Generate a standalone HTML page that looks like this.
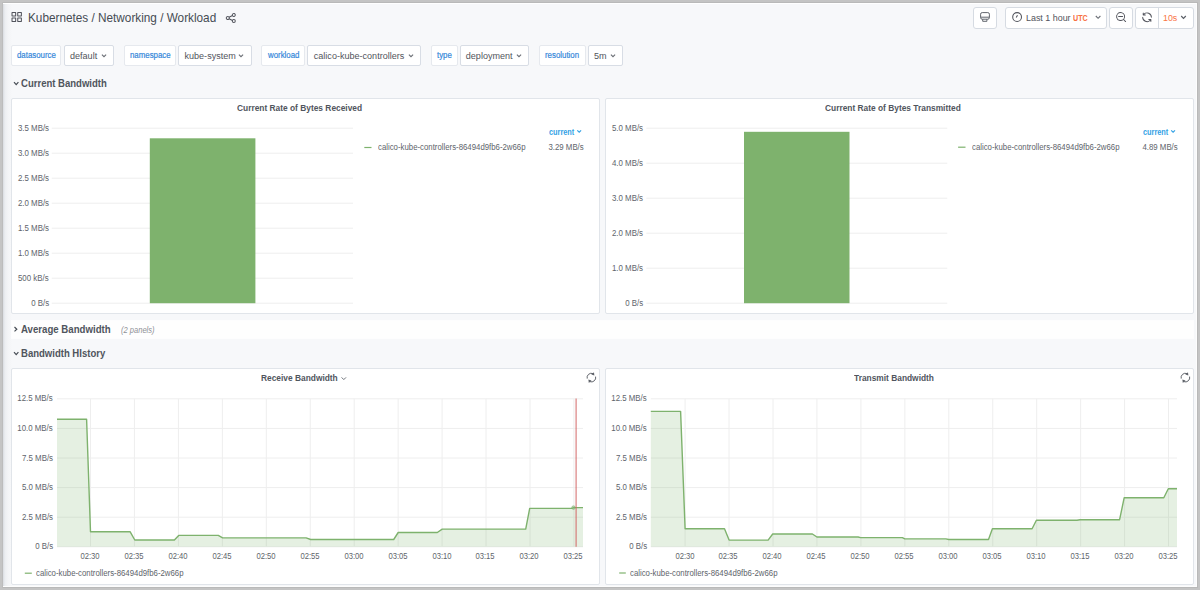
<!DOCTYPE html><html><head><meta charset="utf-8"><style>
html,body{margin:0;padding:0;}html{width:1200px;height:590px;overflow:hidden;}body{width:1200px;height:590px;overflow:hidden;position:relative;background:#c4c4c4;font-family:"Liberation Sans",sans-serif;}
#pg{position:absolute;left:3px;top:3px;width:1194px;height:584px;background:linear-gradient(to right,#d9dce1 0px,#eceef1 2px,#f3f4f6 5px,#f7f8fa 9px);}
</style></head><body><div id="pg"></div>
<div style="position:absolute;left:2px;top:2px;width:1196px;height:1px;background:#b9b9b9"></div>
<div style="position:absolute;left:2px;top:587px;width:1196px;height:1px;background:#b9b9b9"></div>
<div style="position:absolute;left:2px;top:2px;width:1px;height:586px;background:#bcbcbc"></div>
<div style="position:absolute;left:1197px;top:2px;width:1px;height:586px;background:#b9b9b9"></div>
<div style="position:absolute;left:3px;top:3px;width:1194px;height:1px;background:#ffffff"></div>
<div style="position:absolute;left:3px;top:586px;width:1194px;height:1px;background:#fdfdfd"></div>
<div style="position:absolute;left:1196px;top:3px;width:1px;height:584px;background:#fdfdfd"></div>
<svg style="position:absolute;left:0;top:0" width="1200" height="40" viewBox="0 0 1200 40"><path transform="translate(10.46,11.12) scale(0.52,0.49)" d="M10,13H3a1,1,0,0,0-1,1v7a1,1,0,0,0,1,1h7a1,1,0,0,0,1-1V14A1,1,0,0,0,10,13ZM9,20H4V15H9ZM21,2H14a1,1,0,0,0-1,1v7a1,1,0,0,0,1,1h7a1,1,0,0,0,1-1V3A1,1,0,0,0,21,2ZM20,9H15V4h5Zm1,4H14a1,1,0,0,0-1,1v7a1,1,0,0,0,1,1h7a1,1,0,0,0,1-1V14A1,1,0,0,0,21,13Zm-1,7H15V15h5ZM10,2H3A1,1,0,0,0,2,3v7a1,1,0,0,0,1,1h7a1,1,0,0,0,1-1V3A1,1,0,0,0,10,2ZM9,9H4V4H9Z" fill="#52545c"/><path transform="translate(224.80,12.00) scale(0.5)" d="M18,14a4,4,0,0,0-3.08,1.48l-5.1-2.35a3.64,3.64,0,0,0,0-2.26l5.1-2.35A4,4,0,1,0,14,6a4.170,4.170,0,0,0,.07.71L8.790,9.14a4,4,0,1,0,0,5.72l5.28,2.43A4.17,4.17,0,0,0,14,18a4,4,0,1,0,4-4ZM18,4a2,2,0,1,1-2,2A2,2,0,0,1,18,4ZM6,14a2,2,0,1,1,2-2A2,2,0,0,1,6,14Zm12,6a2,2,0,1,1,2-2A2,2,0,0,1,18,20Z" fill="#52545c"/></svg>
<div style="position:absolute;left:28.2px;top:10.88px;font-size:12.4px;line-height:14.248px;color:#464c54;font-weight:400;font-style:normal;white-space:pre;transform:scaleX(0.95);transform-origin:left top;">Kubernetes / Networking / Workload</div>
<div style="position:absolute;left:973px;top:7px;width:24px;height:22px;box-sizing:border-box;background:#fff;border:1px solid #d6dbe2;border-radius:3px;"></div>
<div style="position:absolute;left:1005px;top:7px;width:102px;height:22px;box-sizing:border-box;background:#fff;border:1px solid #d6dbe2;border-radius:3px;"></div>
<div style="position:absolute;left:1109px;top:7px;width:24px;height:22px;box-sizing:border-box;background:#fff;border:1px solid #d6dbe2;border-radius:3px;"></div>
<div style="position:absolute;left:1135px;top:7px;width:59px;height:22px;box-sizing:border-box;background:#fff;border:1px solid #d6dbe2;border-radius:3px;"></div>
<div style="position:absolute;left:1158px;top:7px;width:1px;height:22px;background:#d6dbe2"></div>
<svg style="position:absolute;left:0;top:0" width="1200" height="40" viewBox="0 0 1200 40"><g fill="none" stroke="#5a5e66" stroke-width="0.95"><rect x="980.6" y="12.6" width="8.8" height="6.6" rx="1.6"/><line x1="980.6" y1="17.2" x2="989.4" y2="17.2"/><path d="M982.7,19.2 L982.7,21.3 L986.9,21.3 L986.9,19.2"/></g><g fill="none" stroke="#52545c" stroke-width="1.05"><circle cx="1017.1" cy="17" r="4.4"/><polyline points="1016.2,17.6 1017.5,15.3"/></g><path transform="translate(1115.10,11.10) scale(0.5)" d="M21.71,20.29,18,16.61A9,9,0,1,0,16.61,18l3.68,3.68a1,1,0,0,0,1.42,0A1,1,0,0,0,21.71,20.29ZM11,18a7,7,0,1,1,7-7A7,7,0,0,1,11,18Zm4-8H7a1,1,0,0,0,0,2h8a1,1,0,0,0,0-2Z" fill="#52545c"/><path transform="translate(1141.23,11.43) scale(0.485)" d="M19.91,15.51H15.38a1,1,0,0,0,0,2h2.4A8,8,0,0,1,4,12a1,1,0,0,0-2,0,10,10,0,0,0,16.88,7.23V21a1,1,0,0,0,2,0V16.5A1,1,0,0,0,19.91,15.51ZM12,2A10,10,0,0,0,5.12,4.77V3a1,1,0,0,0-2,0V7.5a1,1,0,0,0,1,1h4.5a1,1,0,0,0,0-2H6.22A8,8,0,0,1,20,12a1,1,0,0,0,2,0A10,10,0,0,0,12,2Z" fill="#52545c"/><g fill="none" stroke="#52545c" stroke-width="1.1"><polyline points="1095.8,16.0 1098.1,18.3 1100.4,16.0" stroke="#6a6e75" stroke-width="1.1"/><polyline points="1181.2,16.0 1183.5,18.3 1185.8,16.0" stroke="#5a5e66" stroke-width="1.2"/></g></svg>
<div style="position:absolute;left:1025.8px;top:12.80px;font-size:9.5px;line-height:10.915px;color:#52545c;font-weight:400;font-style:normal;white-space:pre;transform:scaleX(0.938);transform-origin:left top;">Last 1 hour</div>
<div style="position:absolute;left:1072.9px;top:13.91px;font-size:8.5px;line-height:9.767px;color:#f86f40;font-weight:700;font-style:normal;white-space:pre;transform:scaleX(0.84);transform-origin:left top;">UTC</div>
<div style="position:absolute;left:1162.9px;top:11.71px;font-size:9.6px;line-height:11.030px;color:#fa7545;font-weight:400;font-style:normal;white-space:pre;transform:scaleX(0.918);transform-origin:left top;">10s</div>
<div style="position:absolute;left:11px;top:45px;width:50px;height:21px;box-sizing:border-box;background:#fff;border:1px solid #e6e9ee;border-radius:2px;"></div>
<div style="position:absolute;left:64px;top:45px;width:50px;height:21px;box-sizing:border-box;background:#fff;border:1px solid #d8dde5;border-radius:2px;"></div>
<div style="position:absolute;left:16.8px;top:49.95px;font-size:8.9px;line-height:10.226px;color:#2f83d6;font-weight:400;font-style:normal;white-space:pre;transform:scaleX(0.885);transform-origin:left top;-webkit-text-stroke:0.2px #3a8ee0;">datasource</div>
<div style="position:absolute;left:70px;top:50.81px;font-size:9.05px;line-height:10.398px;color:#52545c;font-weight:400;font-style:normal;white-space:pre;">default</div>
<svg style="position:absolute;left:100.5px;top:52.6px" width="8" height="6"><polyline points="0.9,1.6 3,3.7 5.1,1.6" fill="none" stroke="#6a6e75" stroke-width="1.1"/></svg>
<div style="position:absolute;left:124px;top:45px;width:52px;height:21px;box-sizing:border-box;background:#fff;border:1px solid #e6e9ee;border-radius:2px;"></div>
<div style="position:absolute;left:178px;top:45px;width:74px;height:21px;box-sizing:border-box;background:#fff;border:1px solid #d8dde5;border-radius:2px;"></div>
<div style="position:absolute;left:129.9px;top:49.95px;font-size:8.9px;line-height:10.226px;color:#2f83d6;font-weight:400;font-style:normal;white-space:pre;transform:scaleX(0.885);transform-origin:left top;-webkit-text-stroke:0.2px #3a8ee0;">namespace</div>
<div style="position:absolute;left:184.5px;top:50.81px;font-size:9.05px;line-height:10.398px;color:#52545c;font-weight:400;font-style:normal;white-space:pre;">kube-system</div>
<svg style="position:absolute;left:238px;top:52.6px" width="8" height="6"><polyline points="0.9,1.6 3,3.7 5.1,1.6" fill="none" stroke="#6a6e75" stroke-width="1.1"/></svg>
<div style="position:absolute;left:261px;top:45px;width:44px;height:21px;box-sizing:border-box;background:#fff;border:1px solid #e6e9ee;border-radius:2px;"></div>
<div style="position:absolute;left:307px;top:45px;width:114px;height:21px;box-sizing:border-box;background:#fff;border:1px solid #d8dde5;border-radius:2px;"></div>
<div style="position:absolute;left:267.7px;top:49.95px;font-size:8.9px;line-height:10.226px;color:#2f83d6;font-weight:400;font-style:normal;white-space:pre;transform:scaleX(0.885);transform-origin:left top;-webkit-text-stroke:0.2px #3a8ee0;">workload</div>
<div style="position:absolute;left:313.8px;top:50.81px;font-size:9.05px;line-height:10.398px;color:#52545c;font-weight:400;font-style:normal;white-space:pre;">calico-kube-controllers</div>
<svg style="position:absolute;left:408px;top:52.6px" width="8" height="6"><polyline points="0.9,1.6 3,3.7 5.1,1.6" fill="none" stroke="#6a6e75" stroke-width="1.1"/></svg>
<div style="position:absolute;left:431px;top:45px;width:27px;height:21px;box-sizing:border-box;background:#fff;border:1px solid #e6e9ee;border-radius:2px;"></div>
<div style="position:absolute;left:460px;top:45px;width:69px;height:21px;box-sizing:border-box;background:#fff;border:1px solid #d8dde5;border-radius:2px;"></div>
<div style="position:absolute;left:436.9px;top:49.95px;font-size:8.9px;line-height:10.226px;color:#2f83d6;font-weight:400;font-style:normal;white-space:pre;transform:scaleX(0.885);transform-origin:left top;-webkit-text-stroke:0.2px #3a8ee0;">type</div>
<div style="position:absolute;left:465.8px;top:50.81px;font-size:9.05px;line-height:10.398px;color:#52545c;font-weight:400;font-style:normal;white-space:pre;">deployment</div>
<svg style="position:absolute;left:516px;top:52.6px" width="8" height="6"><polyline points="0.9,1.6 3,3.7 5.1,1.6" fill="none" stroke="#6a6e75" stroke-width="1.1"/></svg>
<div style="position:absolute;left:539px;top:45px;width:47px;height:21px;box-sizing:border-box;background:#fff;border:1px solid #e6e9ee;border-radius:2px;"></div>
<div style="position:absolute;left:588px;top:45px;width:35px;height:21px;box-sizing:border-box;background:#fff;border:1px solid #d8dde5;border-radius:2px;"></div>
<div style="position:absolute;left:545px;top:49.95px;font-size:8.9px;line-height:10.226px;color:#2f83d6;font-weight:400;font-style:normal;white-space:pre;transform:scaleX(0.885);transform-origin:left top;-webkit-text-stroke:0.2px #3a8ee0;">resolution</div>
<div style="position:absolute;left:594px;top:50.81px;font-size:9.05px;line-height:10.398px;color:#52545c;font-weight:400;font-style:normal;white-space:pre;">5m</div>
<svg style="position:absolute;left:610px;top:52.6px" width="8" height="6"><polyline points="0.9,1.6 3,3.7 5.1,1.6" fill="none" stroke="#6a6e75" stroke-width="1.1"/></svg>
<svg style="position:absolute;left:13.2px;top:80.6px" width="8" height="6"><polyline points="1,1.2 3.2,3.6 5.4,1.2" fill="none" stroke="#464c54" stroke-width="1.2"/></svg>
<div style="position:absolute;left:21.1px;top:76.61px;font-size:10.6px;line-height:12.179px;color:#50555d;font-weight:700;font-style:normal;white-space:pre;transform:scaleX(0.9);transform-origin:left top;">Current Bandwidth</div>
<div style="position:absolute;left:11px;top:320px;width:1183px;height:19px;box-sizing:border-box;background:#fefefe;border:1px solid #fdfdfe;border-radius:0px;"></div>
<svg style="position:absolute;left:13px;top:326px" width="6" height="8"><polyline points="1.5,1 3.8,3.2 1.5,5.4" fill="none" stroke="#464c54" stroke-width="1.2"/></svg>
<div style="position:absolute;left:21.1px;top:322.61px;font-size:10.6px;line-height:12.179px;color:#50555d;font-weight:700;font-style:normal;white-space:pre;transform:scaleX(0.91);transform-origin:left top;">Average Bandwidth</div>
<div style="position:absolute;left:120.7px;top:326.09px;font-size:8.3px;line-height:9.537px;color:#8e9096;font-weight:400;font-style:italic;white-space:pre;transform:scaleX(0.91);transform-origin:left top;">(2 panels)</div>
<svg style="position:absolute;left:13.2px;top:351.2px" width="8" height="6"><polyline points="1,1.2 3.2,3.6 5.4,1.2" fill="none" stroke="#464c54" stroke-width="1.2"/></svg>
<div style="position:absolute;left:21.4px;top:346.91px;font-size:10.6px;line-height:12.179px;color:#50555d;font-weight:700;font-style:normal;white-space:pre;transform:scaleX(0.9);transform-origin:left top;">Bandwidth HIstory</div>
<div style="position:absolute;left:11px;top:98px;width:589px;height:216px;box-sizing:border-box;background:#fff;border:1px solid #e1e5ea;border-radius:2px;"></div>
<div style="position:absolute;left:605px;top:98px;width:589px;height:216px;box-sizing:border-box;background:#fff;border:1px solid #e1e5ea;border-radius:2px;"></div>
<div style="position:absolute;left:11px;top:368px;width:589px;height:217px;box-sizing:border-box;background:#fff;border:1px solid #e1e5ea;border-radius:2px;"></div>
<div style="position:absolute;left:605px;top:368px;width:589px;height:217px;box-sizing:border-box;background:#fff;border:1px solid #e1e5ea;border-radius:2px;"></div>
<div style="position:absolute;left:236.9px;top:102.58px;font-size:9.3px;line-height:10.686px;color:#50555d;font-weight:700;font-style:normal;white-space:pre;transform:scaleX(0.9);transform-origin:left top;">Current Rate of Bytes Received</div>
<div style="position:absolute;left:824.5px;top:102.58px;font-size:9.3px;line-height:10.686px;color:#50555d;font-weight:700;font-style:normal;white-space:pre;transform:scaleX(0.9);transform-origin:left top;">Current Rate of Bytes Transmitted</div>
<svg style="position:absolute;left:0;top:0" width="1200" height="590" viewBox="0 0 1200 590"><line x1="51.7" y1="128.2" x2="353" y2="128.2" stroke="#eeeeee" stroke-width="1"/><line x1="51.7" y1="153.2" x2="353" y2="153.2" stroke="#eeeeee" stroke-width="1"/><line x1="51.7" y1="178.2" x2="353" y2="178.2" stroke="#eeeeee" stroke-width="1"/><line x1="51.7" y1="203.2" x2="353" y2="203.2" stroke="#eeeeee" stroke-width="1"/><line x1="51.7" y1="228.2" x2="353" y2="228.2" stroke="#eeeeee" stroke-width="1"/><line x1="51.7" y1="253.2" x2="353" y2="253.2" stroke="#eeeeee" stroke-width="1"/><line x1="51.7" y1="278.2" x2="353" y2="278.2" stroke="#eeeeee" stroke-width="1"/><line x1="51.7" y1="303.2" x2="353" y2="303.2" stroke="#eeeeee" stroke-width="1"/><rect x="149.8" y="138.3" width="105.6" height="164.89999999999998" fill="#7eb26d"/><line x1="646.3" y1="128.2" x2="947.3" y2="128.2" stroke="#eeeeee" stroke-width="1"/><line x1="646.3" y1="163.2" x2="947.3" y2="163.2" stroke="#eeeeee" stroke-width="1"/><line x1="646.3" y1="198.2" x2="947.3" y2="198.2" stroke="#eeeeee" stroke-width="1"/><line x1="646.3" y1="233.2" x2="947.3" y2="233.2" stroke="#eeeeee" stroke-width="1"/><line x1="646.3" y1="268.2" x2="947.3" y2="268.2" stroke="#eeeeee" stroke-width="1"/><line x1="646.3" y1="303.2" x2="947.3" y2="303.2" stroke="#eeeeee" stroke-width="1"/><rect x="744" y="131.8" width="105.5" height="171.39999999999998" fill="#7eb26d"/><line x1="364.3" y1="147.5" x2="371.5" y2="147.5" stroke="#7eb26d" stroke-width="1.2"/><line x1="958.1" y1="147.2" x2="965.5" y2="147.2" stroke="#7eb26d" stroke-width="1.2"/><line x1="24.8" y1="573.2" x2="31.8" y2="573.2" stroke="#7eb26d" stroke-width="1.2"/><line x1="619.2" y1="573" x2="625.8" y2="573" stroke="#7eb26d" stroke-width="1.2"/><polyline points="577.3,130.3 579.2,132.2 581.1,130.3" fill="none" stroke="#33a2e5" stroke-width="1.2"/><polyline points="1171.2,130.3 1173.1,132.2 1175,130.3" fill="none" stroke="#33a2e5" stroke-width="1.2"/><line x1="57" y1="398.80" x2="583" y2="398.80" stroke="#eeeeee" stroke-width="1"/><line x1="57" y1="428.40" x2="583" y2="428.40" stroke="#eeeeee" stroke-width="1"/><line x1="57" y1="458.00" x2="583" y2="458.00" stroke="#eeeeee" stroke-width="1"/><line x1="57" y1="487.60" x2="583" y2="487.60" stroke="#eeeeee" stroke-width="1"/><line x1="57" y1="517.20" x2="583" y2="517.20" stroke="#eeeeee" stroke-width="1"/><line x1="57" y1="546.80" x2="583" y2="546.80" stroke="#eeeeee" stroke-width="1"/><line x1="90.50" y1="398.8" x2="90.50" y2="546.8" stroke="#eeeeee" stroke-width="1"/><line x1="134.45" y1="398.8" x2="134.45" y2="546.8" stroke="#eeeeee" stroke-width="1"/><line x1="178.40" y1="398.8" x2="178.40" y2="546.8" stroke="#eeeeee" stroke-width="1"/><line x1="222.35" y1="398.8" x2="222.35" y2="546.8" stroke="#eeeeee" stroke-width="1"/><line x1="266.30" y1="398.8" x2="266.30" y2="546.8" stroke="#eeeeee" stroke-width="1"/><line x1="310.25" y1="398.8" x2="310.25" y2="546.8" stroke="#eeeeee" stroke-width="1"/><line x1="354.20" y1="398.8" x2="354.20" y2="546.8" stroke="#eeeeee" stroke-width="1"/><line x1="398.15" y1="398.8" x2="398.15" y2="546.8" stroke="#eeeeee" stroke-width="1"/><line x1="442.10" y1="398.8" x2="442.10" y2="546.8" stroke="#eeeeee" stroke-width="1"/><line x1="486.05" y1="398.8" x2="486.05" y2="546.8" stroke="#eeeeee" stroke-width="1"/><line x1="530.00" y1="398.8" x2="530.00" y2="546.8" stroke="#eeeeee" stroke-width="1"/><line x1="573.95" y1="398.8" x2="573.95" y2="546.8" stroke="#eeeeee" stroke-width="1"/><line x1="650.8" y1="398.80" x2="1177" y2="398.80" stroke="#eeeeee" stroke-width="1"/><line x1="650.8" y1="428.40" x2="1177" y2="428.40" stroke="#eeeeee" stroke-width="1"/><line x1="650.8" y1="458.00" x2="1177" y2="458.00" stroke="#eeeeee" stroke-width="1"/><line x1="650.8" y1="487.60" x2="1177" y2="487.60" stroke="#eeeeee" stroke-width="1"/><line x1="650.8" y1="517.20" x2="1177" y2="517.20" stroke="#eeeeee" stroke-width="1"/><line x1="650.8" y1="546.80" x2="1177" y2="546.80" stroke="#eeeeee" stroke-width="1"/><line x1="685.10" y1="398.8" x2="685.10" y2="546.8" stroke="#eeeeee" stroke-width="1"/><line x1="729.05" y1="398.8" x2="729.05" y2="546.8" stroke="#eeeeee" stroke-width="1"/><line x1="773.00" y1="398.8" x2="773.00" y2="546.8" stroke="#eeeeee" stroke-width="1"/><line x1="816.95" y1="398.8" x2="816.95" y2="546.8" stroke="#eeeeee" stroke-width="1"/><line x1="860.90" y1="398.8" x2="860.90" y2="546.8" stroke="#eeeeee" stroke-width="1"/><line x1="904.85" y1="398.8" x2="904.85" y2="546.8" stroke="#eeeeee" stroke-width="1"/><line x1="948.80" y1="398.8" x2="948.80" y2="546.8" stroke="#eeeeee" stroke-width="1"/><line x1="992.75" y1="398.8" x2="992.75" y2="546.8" stroke="#eeeeee" stroke-width="1"/><line x1="1036.70" y1="398.8" x2="1036.70" y2="546.8" stroke="#eeeeee" stroke-width="1"/><line x1="1080.65" y1="398.8" x2="1080.65" y2="546.8" stroke="#eeeeee" stroke-width="1"/><line x1="1124.60" y1="398.8" x2="1124.60" y2="546.8" stroke="#eeeeee" stroke-width="1"/><line x1="1168.55" y1="398.8" x2="1168.55" y2="546.8" stroke="#eeeeee" stroke-width="1"/><path d="M57.0,419.3 L86.6,419.3 L90.5,531.8 L130.2,531.8 L134.8,540.0 L174.4,540.0 L178.7,535.4 L218.3,535.4 L222.6,537.9 L306.1,537.9 L310.7,539.5 L393.7,539.5 L398.2,532.5 L437.3,532.5 L442.2,529.1 L525.7,529.1 L529.7,508.4 L571.5,508.4 L574.0,507.6 L583.0,507.6 L583.0,546.8 L57.0,546.8 Z" fill="#7eb26d" fill-opacity="0.2" stroke="none"/><path d="M57.0,419.3 L86.6,419.3 L90.5,531.8 L130.2,531.8 L134.8,540.0 L174.4,540.0 L178.7,535.4 L218.3,535.4 L222.6,537.9 L306.1,537.9 L310.7,539.5 L393.7,539.5 L398.2,532.5 L437.3,532.5 L442.2,529.1 L525.7,529.1 L529.7,508.4 L571.5,508.4 L574.0,507.6 L583.0,507.6" fill="none" stroke="#7eb26d" stroke-width="1.4" stroke-linejoin="round"/><circle cx="573.5" cy="507.6" r="1.8" fill="#7eb26d" fill-opacity="0.5" stroke="#7eb26d" stroke-opacity="0.6" stroke-width="0.8"/><line x1="576.1" y1="398.5" x2="576.1" y2="546.8" stroke="#d0605f" stroke-opacity="0.8" stroke-width="1.2"/><path d="M650.8,411.4 L680.6,411.4 L685.1,528.8 L724.5,528.8 L729.1,540.1 L768.1,540.1 L772.7,534.0 L812.4,534.0 L816.9,537.0 L858.1,537.0 L860.6,537.6 L902.4,537.6 L904.8,538.9 L945.8,538.9 L948.8,539.5 L988.5,539.5 L992.4,528.8 L1032.1,528.8 L1036.4,520.3 L1077.0,520.3 L1080.0,519.7 L1119.6,519.7 L1124.2,497.7 L1163.8,497.7 L1168.3,488.7 L1177.0,488.7 L1177.0,546.8 L650.8,546.8 Z" fill="#7eb26d" fill-opacity="0.2" stroke="none"/><path d="M650.8,411.4 L680.6,411.4 L685.1,528.8 L724.5,528.8 L729.1,540.1 L768.1,540.1 L772.7,534.0 L812.4,534.0 L816.9,537.0 L858.1,537.0 L860.6,537.6 L902.4,537.6 L904.8,538.9 L945.8,538.9 L948.8,539.5 L988.5,539.5 L992.4,528.8 L1032.1,528.8 L1036.4,520.3 L1077.0,520.3 L1080.0,519.7 L1119.6,519.7 L1124.2,497.7 L1163.8,497.7 L1168.3,488.7 L1177.0,488.7" fill="none" stroke="#7eb26d" stroke-width="1.4" stroke-linejoin="round"/><g fill="none" stroke="#60646b" stroke-width="1.0"><path d="M587.1999999999999,378.6 A4.3,4.3 0 0 1 593.0,373.6"/><path d="M595.6,376.6 A4.3,4.3 0 0 1 589.8,381.6"/></g><g fill="#60646b"><path d="M594.0,372.2 L594.4,375.6 L591.3,374.6 Z"/><path d="M588.8,383.0 L588.4,379.6 L591.5,380.6 Z"/></g><g fill="none" stroke="#60646b" stroke-width="1.0"><path d="M1181.2,378.6 A4.3,4.3 0 0 1 1187.0,373.6"/><path d="M1189.6000000000001,376.6 A4.3,4.3 0 0 1 1183.8000000000002,381.6"/></g><g fill="#60646b"><path d="M1188.0,372.2 L1188.4,375.6 L1185.3000000000002,374.6 Z"/><path d="M1182.8000000000002,383.0 L1182.4,379.6 L1185.5,380.6 Z"/></g><polyline points="341.6,377.4 343.8,379.6 346.0,377.4" fill="none" stroke="#6e737a" stroke-width="1.0"/></svg>
<div style="position:absolute;right:1151.3px;top:124.40px;font-size:8.4px;line-height:9.652px;color:#60646b;font-weight:400;font-style:normal;white-space:pre;transform:scaleX(0.94);transform-origin:right top;">3.5 MB/s</div>
<div style="position:absolute;right:1151.3px;top:149.40px;font-size:8.4px;line-height:9.652px;color:#60646b;font-weight:400;font-style:normal;white-space:pre;transform:scaleX(0.94);transform-origin:right top;">3.0 MB/s</div>
<div style="position:absolute;right:1151.3px;top:174.40px;font-size:8.4px;line-height:9.652px;color:#60646b;font-weight:400;font-style:normal;white-space:pre;transform:scaleX(0.94);transform-origin:right top;">2.5 MB/s</div>
<div style="position:absolute;right:1151.3px;top:199.40px;font-size:8.4px;line-height:9.652px;color:#60646b;font-weight:400;font-style:normal;white-space:pre;transform:scaleX(0.94);transform-origin:right top;">2.0 MB/s</div>
<div style="position:absolute;right:1151.3px;top:224.40px;font-size:8.4px;line-height:9.652px;color:#60646b;font-weight:400;font-style:normal;white-space:pre;transform:scaleX(0.94);transform-origin:right top;">1.5 MB/s</div>
<div style="position:absolute;right:1151.3px;top:249.40px;font-size:8.4px;line-height:9.652px;color:#60646b;font-weight:400;font-style:normal;white-space:pre;transform:scaleX(0.94);transform-origin:right top;">1.0 MB/s</div>
<div style="position:absolute;right:1151.3px;top:274.40px;font-size:8.4px;line-height:9.652px;color:#60646b;font-weight:400;font-style:normal;white-space:pre;transform:scaleX(0.94);transform-origin:right top;">500 kB/s</div>
<div style="position:absolute;right:1151.3px;top:299.40px;font-size:8.4px;line-height:9.652px;color:#60646b;font-weight:400;font-style:normal;white-space:pre;transform:scaleX(0.94);transform-origin:right top;">0 B/s</div>
<div style="position:absolute;right:557.3px;top:124.40px;font-size:8.4px;line-height:9.652px;color:#60646b;font-weight:400;font-style:normal;white-space:pre;transform:scaleX(0.94);transform-origin:right top;">5.0 MB/s</div>
<div style="position:absolute;right:557.3px;top:159.40px;font-size:8.4px;line-height:9.652px;color:#60646b;font-weight:400;font-style:normal;white-space:pre;transform:scaleX(0.94);transform-origin:right top;">4.0 MB/s</div>
<div style="position:absolute;right:557.3px;top:194.40px;font-size:8.4px;line-height:9.652px;color:#60646b;font-weight:400;font-style:normal;white-space:pre;transform:scaleX(0.94);transform-origin:right top;">3.0 MB/s</div>
<div style="position:absolute;right:557.3px;top:229.40px;font-size:8.4px;line-height:9.652px;color:#60646b;font-weight:400;font-style:normal;white-space:pre;transform:scaleX(0.94);transform-origin:right top;">2.0 MB/s</div>
<div style="position:absolute;right:557.3px;top:264.40px;font-size:8.4px;line-height:9.652px;color:#60646b;font-weight:400;font-style:normal;white-space:pre;transform:scaleX(0.94);transform-origin:right top;">1.0 MB/s</div>
<div style="position:absolute;right:557.3px;top:299.40px;font-size:8.4px;line-height:9.652px;color:#60646b;font-weight:400;font-style:normal;white-space:pre;transform:scaleX(0.94);transform-origin:right top;">0 B/s</div>
<div style="position:absolute;right:1147px;top:394.40px;font-size:8.4px;line-height:9.652px;color:#60646b;font-weight:400;font-style:normal;white-space:pre;transform:scaleX(0.94);transform-origin:right top;">12.5 MB/s</div>
<div style="position:absolute;right:553px;top:394.40px;font-size:8.4px;line-height:9.652px;color:#60646b;font-weight:400;font-style:normal;white-space:pre;transform:scaleX(0.94);transform-origin:right top;">12.5 MB/s</div>
<div style="position:absolute;right:1147px;top:424.40px;font-size:8.4px;line-height:9.652px;color:#60646b;font-weight:400;font-style:normal;white-space:pre;transform:scaleX(0.94);transform-origin:right top;">10.0 MB/s</div>
<div style="position:absolute;right:553px;top:424.40px;font-size:8.4px;line-height:9.652px;color:#60646b;font-weight:400;font-style:normal;white-space:pre;transform:scaleX(0.94);transform-origin:right top;">10.0 MB/s</div>
<div style="position:absolute;right:1147px;top:454.40px;font-size:8.4px;line-height:9.652px;color:#60646b;font-weight:400;font-style:normal;white-space:pre;transform:scaleX(0.94);transform-origin:right top;">7.5 MB/s</div>
<div style="position:absolute;right:553px;top:454.40px;font-size:8.4px;line-height:9.652px;color:#60646b;font-weight:400;font-style:normal;white-space:pre;transform:scaleX(0.94);transform-origin:right top;">7.5 MB/s</div>
<div style="position:absolute;right:1147px;top:483.40px;font-size:8.4px;line-height:9.652px;color:#60646b;font-weight:400;font-style:normal;white-space:pre;transform:scaleX(0.94);transform-origin:right top;">5.0 MB/s</div>
<div style="position:absolute;right:553px;top:483.40px;font-size:8.4px;line-height:9.652px;color:#60646b;font-weight:400;font-style:normal;white-space:pre;transform:scaleX(0.94);transform-origin:right top;">5.0 MB/s</div>
<div style="position:absolute;right:1147px;top:513.40px;font-size:8.4px;line-height:9.652px;color:#60646b;font-weight:400;font-style:normal;white-space:pre;transform:scaleX(0.94);transform-origin:right top;">2.5 MB/s</div>
<div style="position:absolute;right:553px;top:513.40px;font-size:8.4px;line-height:9.652px;color:#60646b;font-weight:400;font-style:normal;white-space:pre;transform:scaleX(0.94);transform-origin:right top;">2.5 MB/s</div>
<div style="position:absolute;right:1147px;top:542.40px;font-size:8.4px;line-height:9.652px;color:#60646b;font-weight:400;font-style:normal;white-space:pre;transform:scaleX(0.94);transform-origin:right top;">0 B/s</div>
<div style="position:absolute;right:553px;top:542.40px;font-size:8.4px;line-height:9.652px;color:#60646b;font-weight:400;font-style:normal;white-space:pre;transform:scaleX(0.94);transform-origin:right top;">0 B/s</div>
<div style="position:absolute;left:69.9px;width:40px;text-align:center;top:551.69px;font-size:8.3px;line-height:9.537px;color:#60646b;font-weight:400;font-style:normal;white-space:pre;transform:scaleX(0.92);transform-origin:center top;">02:30</div>
<div style="position:absolute;left:664.5px;width:40px;text-align:center;top:551.69px;font-size:8.3px;line-height:9.537px;color:#60646b;font-weight:400;font-style:normal;white-space:pre;transform:scaleX(0.92);transform-origin:center top;">02:30</div>
<div style="position:absolute;left:113.85px;width:40px;text-align:center;top:551.69px;font-size:8.3px;line-height:9.537px;color:#60646b;font-weight:400;font-style:normal;white-space:pre;transform:scaleX(0.92);transform-origin:center top;">02:35</div>
<div style="position:absolute;left:708.45px;width:40px;text-align:center;top:551.69px;font-size:8.3px;line-height:9.537px;color:#60646b;font-weight:400;font-style:normal;white-space:pre;transform:scaleX(0.92);transform-origin:center top;">02:35</div>
<div style="position:absolute;left:157.8px;width:40px;text-align:center;top:551.69px;font-size:8.3px;line-height:9.537px;color:#60646b;font-weight:400;font-style:normal;white-space:pre;transform:scaleX(0.92);transform-origin:center top;">02:40</div>
<div style="position:absolute;left:752.4px;width:40px;text-align:center;top:551.69px;font-size:8.3px;line-height:9.537px;color:#60646b;font-weight:400;font-style:normal;white-space:pre;transform:scaleX(0.92);transform-origin:center top;">02:40</div>
<div style="position:absolute;left:201.75000000000003px;width:40px;text-align:center;top:551.69px;font-size:8.3px;line-height:9.537px;color:#60646b;font-weight:400;font-style:normal;white-space:pre;transform:scaleX(0.92);transform-origin:center top;">02:45</div>
<div style="position:absolute;left:796.35px;width:40px;text-align:center;top:551.69px;font-size:8.3px;line-height:9.537px;color:#60646b;font-weight:400;font-style:normal;white-space:pre;transform:scaleX(0.92);transform-origin:center top;">02:45</div>
<div style="position:absolute;left:245.7px;width:40px;text-align:center;top:551.69px;font-size:8.3px;line-height:9.537px;color:#60646b;font-weight:400;font-style:normal;white-space:pre;transform:scaleX(0.92);transform-origin:center top;">02:50</div>
<div style="position:absolute;left:840.3000000000001px;width:40px;text-align:center;top:551.69px;font-size:8.3px;line-height:9.537px;color:#60646b;font-weight:400;font-style:normal;white-space:pre;transform:scaleX(0.92);transform-origin:center top;">02:50</div>
<div style="position:absolute;left:289.65px;width:40px;text-align:center;top:551.69px;font-size:8.3px;line-height:9.537px;color:#60646b;font-weight:400;font-style:normal;white-space:pre;transform:scaleX(0.92);transform-origin:center top;">02:55</div>
<div style="position:absolute;left:884.25px;width:40px;text-align:center;top:551.69px;font-size:8.3px;line-height:9.537px;color:#60646b;font-weight:400;font-style:normal;white-space:pre;transform:scaleX(0.92);transform-origin:center top;">02:55</div>
<div style="position:absolute;left:333.6px;width:40px;text-align:center;top:551.69px;font-size:8.3px;line-height:9.537px;color:#60646b;font-weight:400;font-style:normal;white-space:pre;transform:scaleX(0.92);transform-origin:center top;">03:00</div>
<div style="position:absolute;left:928.2px;width:40px;text-align:center;top:551.69px;font-size:8.3px;line-height:9.537px;color:#60646b;font-weight:400;font-style:normal;white-space:pre;transform:scaleX(0.92);transform-origin:center top;">03:00</div>
<div style="position:absolute;left:377.55px;width:40px;text-align:center;top:551.69px;font-size:8.3px;line-height:9.537px;color:#60646b;font-weight:400;font-style:normal;white-space:pre;transform:scaleX(0.92);transform-origin:center top;">03:05</div>
<div style="position:absolute;left:972.15px;width:40px;text-align:center;top:551.69px;font-size:8.3px;line-height:9.537px;color:#60646b;font-weight:400;font-style:normal;white-space:pre;transform:scaleX(0.92);transform-origin:center top;">03:05</div>
<div style="position:absolute;left:421.5px;width:40px;text-align:center;top:551.69px;font-size:8.3px;line-height:9.537px;color:#60646b;font-weight:400;font-style:normal;white-space:pre;transform:scaleX(0.92);transform-origin:center top;">03:10</div>
<div style="position:absolute;left:1016.1000000000001px;width:40px;text-align:center;top:551.69px;font-size:8.3px;line-height:9.537px;color:#60646b;font-weight:400;font-style:normal;white-space:pre;transform:scaleX(0.92);transform-origin:center top;">03:10</div>
<div style="position:absolute;left:465.45px;width:40px;text-align:center;top:551.69px;font-size:8.3px;line-height:9.537px;color:#60646b;font-weight:400;font-style:normal;white-space:pre;transform:scaleX(0.92);transform-origin:center top;">03:15</div>
<div style="position:absolute;left:1060.0500000000002px;width:40px;text-align:center;top:551.69px;font-size:8.3px;line-height:9.537px;color:#60646b;font-weight:400;font-style:normal;white-space:pre;transform:scaleX(0.92);transform-origin:center top;">03:15</div>
<div style="position:absolute;left:509.4px;width:40px;text-align:center;top:551.69px;font-size:8.3px;line-height:9.537px;color:#60646b;font-weight:400;font-style:normal;white-space:pre;transform:scaleX(0.92);transform-origin:center top;">03:20</div>
<div style="position:absolute;left:1104.0px;width:40px;text-align:center;top:551.69px;font-size:8.3px;line-height:9.537px;color:#60646b;font-weight:400;font-style:normal;white-space:pre;transform:scaleX(0.92);transform-origin:center top;">03:20</div>
<div style="position:absolute;left:553.35px;width:40px;text-align:center;top:551.69px;font-size:8.3px;line-height:9.537px;color:#60646b;font-weight:400;font-style:normal;white-space:pre;transform:scaleX(0.92);transform-origin:center top;">03:25</div>
<div style="position:absolute;left:1147.9500000000003px;width:40px;text-align:center;top:551.69px;font-size:8.3px;line-height:9.537px;color:#60646b;font-weight:400;font-style:normal;white-space:pre;transform:scaleX(0.92);transform-origin:center top;">03:25</div>
<div style="position:absolute;left:377.9px;top:142.50px;font-size:8.4px;line-height:9.652px;color:#60646b;font-weight:400;font-style:normal;white-space:pre;transform:scaleX(0.932);transform-origin:left top;">calico-kube-controllers-86494d9fb6-2w66p</div>
<div style="position:absolute;right:616.2px;top:142.50px;font-size:8.4px;line-height:9.652px;color:#60646b;font-weight:400;font-style:normal;white-space:pre;transform:scaleX(0.936);transform-origin:right top;">3.29 MB/s</div>
<div style="position:absolute;left:548.7px;top:126.64px;font-size:8.8px;line-height:10.111px;color:#33a2e5;font-weight:700;font-style:normal;white-space:pre;transform:scaleX(0.834);transform-origin:left top;">current</div>
<div style="position:absolute;left:971.6px;top:142.50px;font-size:8.4px;line-height:9.652px;color:#60646b;font-weight:400;font-style:normal;white-space:pre;transform:scaleX(0.932);transform-origin:left top;">calico-kube-controllers-86494d9fb6-2w66p</div>
<div style="position:absolute;right:21.799999999999955px;top:142.50px;font-size:8.4px;line-height:9.652px;color:#60646b;font-weight:400;font-style:normal;white-space:pre;transform:scaleX(0.936);transform-origin:right top;">4.89 MB/s</div>
<div style="position:absolute;left:1143.1px;top:126.64px;font-size:8.8px;line-height:10.111px;color:#33a2e5;font-weight:700;font-style:normal;white-space:pre;transform:scaleX(0.834);transform-origin:left top;">current</div>
<div style="position:absolute;left:36px;top:569.00px;font-size:8.4px;line-height:9.652px;color:#60646b;font-weight:400;font-style:normal;white-space:pre;transform:scaleX(0.932);transform-origin:left top;">calico-kube-controllers-86494d9fb6-2w66p</div>
<div style="position:absolute;left:630.3px;top:569.00px;font-size:8.4px;line-height:9.652px;color:#60646b;font-weight:400;font-style:normal;white-space:pre;transform:scaleX(0.932);transform-origin:left top;">calico-kube-controllers-86494d9fb6-2w66p</div>
<div style="position:absolute;left:261px;top:373.08px;font-size:9.3px;line-height:10.686px;color:#50555d;font-weight:700;font-style:normal;white-space:pre;transform:scaleX(0.9);transform-origin:left top;">Receive Bandwidth</div>
<div style="position:absolute;left:853.8px;top:373.08px;font-size:9.3px;line-height:10.686px;color:#50555d;font-weight:700;font-style:normal;white-space:pre;transform:scaleX(0.9);transform-origin:left top;">Transmit Bandwidth</div>
</body></html>
